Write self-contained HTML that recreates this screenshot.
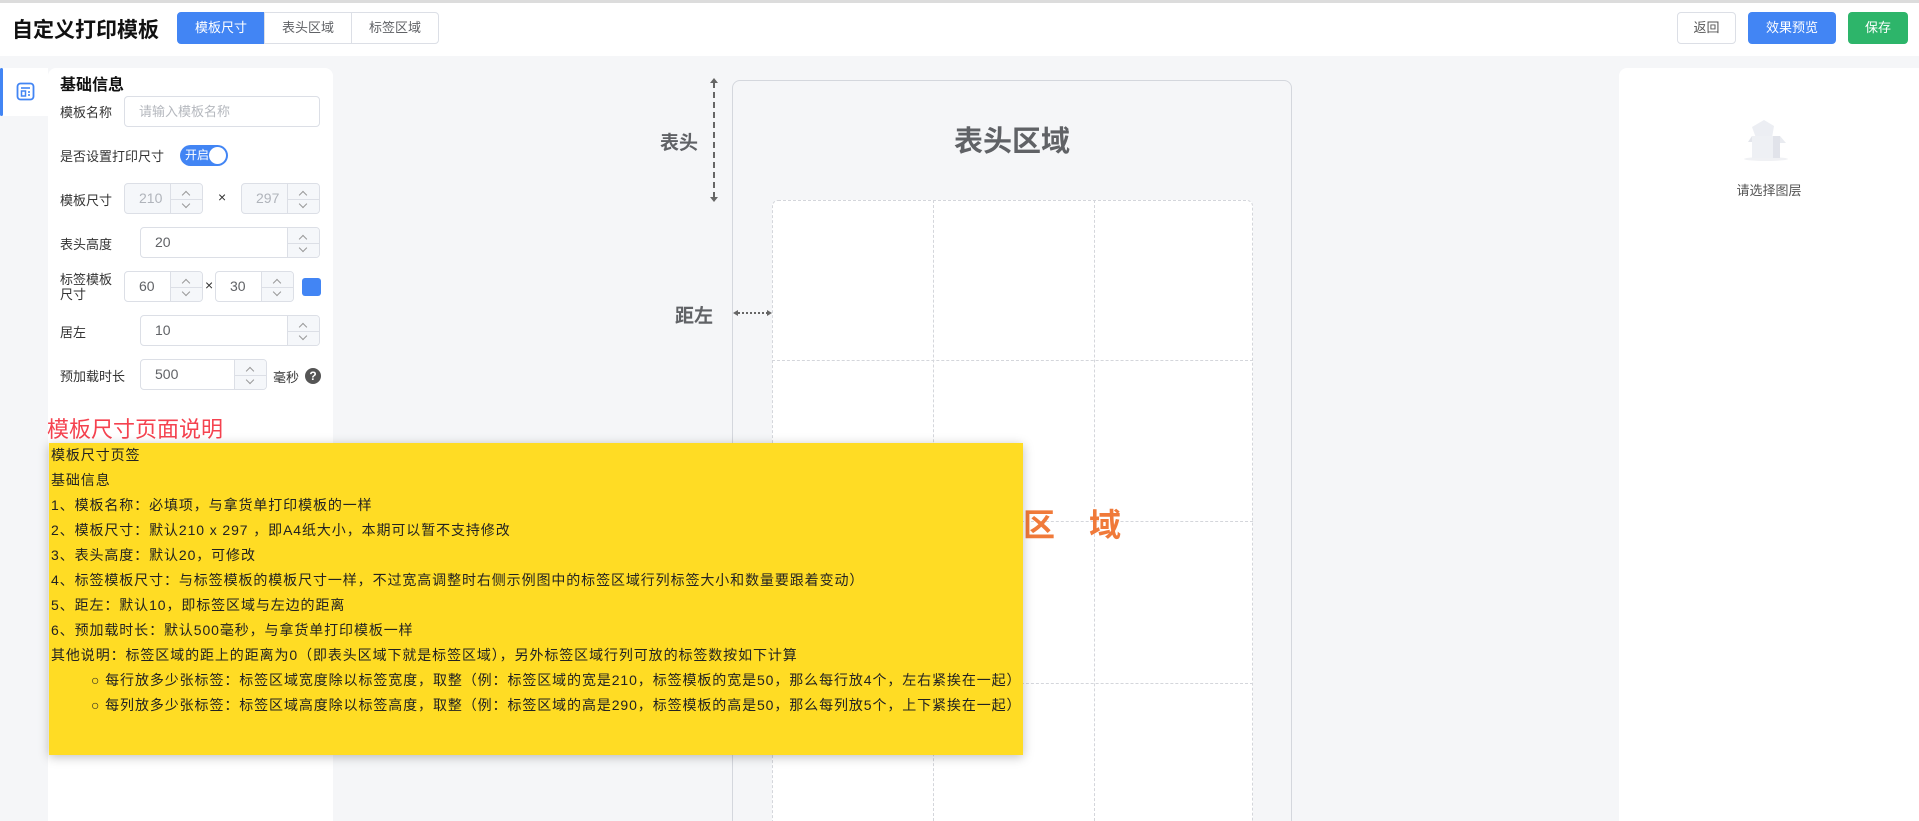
<!DOCTYPE html>
<html><head><meta charset="utf-8"><style>
*{box-sizing:border-box;margin:0;padding:0}
html{width:1919px;height:821px;overflow:hidden}
body{width:1919px;height:821px;overflow:hidden;background:#f5f6f8;font-family:"Liberation Sans","Noto Sans CJK SC",sans-serif;color:#333;position:relative}
.a{position:absolute}
.hdr{left:0;top:0;width:1919px;height:56px;background:#fff;border-top:3px solid #dcdcdc}
.tab{top:12px;height:32px;border:1px solid #dcdfe6;font-size:13px;line-height:30px;text-align:center;color:#606266;background:#fff}
.btn{top:12px;height:32px;border-radius:4px;font-size:13px;line-height:32px;text-align:center;color:#fff}
.lbl{font-size:13px;color:#333;white-space:nowrap}
.inp{border:1px solid #dcdfe6;border-radius:4px;background:#fff;height:31px;font-size:14px;color:#606266;line-height:29px;padding-left:14px;overflow:hidden}
.inp.dis{background:#f5f7fa;color:#b0b4bb}
.sp{position:absolute;right:0;top:0;width:32px;height:100%;border-left:1px solid #dcdfe6;background:#f5f7fa}
.sp:after{content:"";position:absolute;left:0;right:0;top:50%;border-top:1px solid #dcdfe6}
.sp i{position:absolute;left:12px;width:6px;height:6px;border-left:1px solid #999;border-top:1px solid #999}
.sp i.u{top:8px;transform:rotate(45deg)}
.sp i.d{top:17px;transform:rotate(225deg)}
.y p{font-size:14px;letter-spacing:0.9px;line-height:25px;height:25px;white-space:nowrap;color:#222}
</style></head><body>
<div class="a hdr"></div>
<div class="a" style="left:12px;top:14px;font-size:21px;font-weight:bold;color:#111">自定义打印模板</div>
<div class="a tab" style="left:177px;width:88px;background:#4285f4;color:#fff;border-color:#4285f4;border-radius:4px 0 0 4px">模板尺寸</div>
<div class="a tab" style="left:264px;width:88px">表头区域</div>
<div class="a tab" style="left:351px;width:88px;border-radius:0 4px 4px 0">标签区域</div>
<div class="a btn" style="left:1677px;width:59px;border:1px solid #dcdfe6;color:#555;line-height:30px;background:#fff">返回</div>
<div class="a btn" style="left:1748px;width:88px;background:#4285f4">效果预览</div>
<div class="a btn" style="left:1848px;width:60px;background:#2db56a">保存</div>

<div class="a" style="left:0;top:68px;width:48px;height:48px;background:#fff"></div>
<div class="a" style="left:0;top:68px;width:3px;height:48px;background:#4285f4;border-radius:2px"></div>
<svg class="a" style="left:16px;top:82px" width="19" height="19" viewBox="0 0 19 19"><rect x="1.5" y="1.5" width="16" height="16" rx="3" fill="none" stroke="#4285f4" stroke-width="1.8"/><line x1="5" y1="6" x2="14" y2="6" stroke="#4285f4" stroke-width="1.6"/><rect x="5.5" y="9" width="4" height="5" fill="none" stroke="#4285f4" stroke-width="1.5"/><line x1="12" y1="10" x2="14" y2="10" stroke="#4285f4" stroke-width="1.6"/><line x1="12" y1="13" x2="14" y2="13" stroke="#4285f4" stroke-width="1.6"/></svg>

<div class="a" style="left:48px;top:68px;width:285px;height:753px;background:#fff;border-radius:8px 8px 0 0"></div>
<div class="a" style="left:60px;top:71px;font-size:16px;font-weight:bold;color:#111">基础信息</div>
<div class="a lbl" style="left:60px;top:102px">模板名称</div>
<div class="a inp" style="left:124px;top:96px;width:196px;color:#b5b8be;font-size:13px">请输入模板名称</div>
<div class="a lbl" style="left:60px;top:146px">是否设置打印尺寸</div>
<div class="a" style="left:180px;top:145px;width:48px;height:21px;border-radius:11px;background:#4285f4;color:#fff;font-size:12px;line-height:21px;padding-left:5px">开启<span style="position:absolute;right:2px;top:2px;width:17px;height:17px;border-radius:50%;background:#fff"></span></div>
<div class="a lbl" style="left:60px;top:190px">模板尺寸</div>
<div class="a inp dis" style="left:124px;top:183px;width:79px">210<div class="sp"><i class="u"></i><i class="d"></i></div></div>
<div class="a" style="left:218px;top:189px;font-size:14px">×</div>
<div class="a inp dis" style="left:241px;top:183px;width:79px">297<div class="sp"><i class="u"></i><i class="d"></i></div></div>
<div class="a lbl" style="left:60px;top:234px">表头高度</div>
<div class="a inp" style="left:140px;top:227px;width:180px">20<div class="sp"><i class="u"></i><i class="d"></i></div></div>
<div class="a lbl" style="left:60px;top:272px;line-height:15px">标签模板<br>尺寸</div>
<div class="a inp" style="left:124px;top:271px;width:79px">60<div class="sp"><i class="u"></i><i class="d"></i></div></div>
<div class="a" style="left:205px;top:277px;font-size:14px">×</div>
<div class="a inp" style="left:215px;top:271px;width:79px">30<div class="sp"><i class="u"></i><i class="d"></i></div></div>
<div class="a" style="left:302px;top:278px;width:19px;height:18px;border-radius:3px;background:#4285f4"></div>
<div class="a lbl" style="left:60px;top:322px">居左</div>
<div class="a inp" style="left:140px;top:315px;width:180px">10<div class="sp"><i class="u"></i><i class="d"></i></div></div>
<div class="a lbl" style="left:60px;top:366px">预加载时长</div>
<div class="a inp" style="left:140px;top:359px;width:127px">500<div class="sp"><i class="u"></i><i class="d"></i></div></div>
<div class="a lbl" style="left:273px;top:367px">毫秒</div>
<div class="a" style="left:305px;top:368px;width:16px;height:16px;border-radius:50%;background:#555;color:#fff;font-size:12px;font-weight:bold;line-height:16px;text-align:center">?</div>
<div class="a" style="left:47px;top:412px;font-size:22px;color:#f5424f">模板尺寸页面说明</div>

<div class="a" style="left:732px;top:80px;width:560px;height:760px;border:1px solid #d4d7dd;border-radius:8px;background:#f5f6f8"></div>
<div class="a" style="left:732px;top:118px;width:560px;text-align:center;font-size:29px;font-weight:bold;color:#606266">表头区域</div>
<div class="a" style="left:772px;top:200px;width:481px;height:640px;background:#fff;border:1px dashed #d4d6db;border-radius:6px"></div>
<div class="a" style="left:933px;top:200px;height:621px;border-left:1px dashed #d4d6db"></div>
<div class="a" style="left:1094px;top:200px;height:621px;border-left:1px dashed #d4d6db"></div>
<div class="a" style="left:772px;top:360px;width:481px;border-top:1px dashed #d4d6db"></div>
<div class="a" style="left:772px;top:521px;width:481px;border-top:1px dashed #d4d6db"></div>
<div class="a" style="left:772px;top:683px;width:481px;border-top:1px dashed #d4d6db"></div>
<div class="a" style="left:891px;top:500px;font-size:32px;font-weight:bold;color:#f07a3a;letter-spacing:34px;white-space:nowrap">标签区域</div>
<div class="a" style="left:660px;top:128px;font-size:19px;font-weight:bold;color:#606266">表头</div>
<div class="a" style="left:713px;top:82px;height:116px;border-left:2px dashed #666"></div>
<div class="a" style="left:710px;top:78px;border:4px solid transparent;border-bottom:5px solid #666;border-top:0"></div>
<div class="a" style="left:710px;top:197px;border:4px solid transparent;border-top:5px solid #666;border-bottom:0"></div>
<div class="a" style="left:675px;top:301px;font-size:19px;font-weight:bold;color:#606266">距左</div>
<div class="a" style="left:738px;top:312px;width:30px;border-top:2px dotted #666"></div>
<div class="a" style="left:733px;top:310px;border:3px solid transparent;border-right:5px solid #666;border-left:0"></div>
<div class="a" style="left:767px;top:310px;border:3px solid transparent;border-left:5px solid #666;border-right:0"></div>

<div class="a" style="left:1619px;top:68px;width:300px;height:753px;background:#fff;border-radius:8px 0 0 0"></div>
<svg class="a" style="left:1744px;top:112px" width="44" height="50" viewBox="0 0 44 50"><ellipse cx="22" cy="47" rx="22" ry="2" fill="#f0f1f4"/><polygon points="8,15 20,8 30,14 28,26 12,26" fill="#eceef3"/><rect x="8" y="24" width="28" height="22" fill="#eef0f4"/><rect x="29" y="24" width="7" height="22" fill="#e1e3ea"/><polygon points="4,30 8,24 8,30" fill="#e3e5eb"/><polygon points="36,24 42,31 36,31" fill="#e9ebf0"/></svg>
<div class="a" style="left:1619px;top:180px;width:300px;text-align:center;font-size:13px;color:#555">请选择图层</div>

<div class="a y" style="left:49px;top:443px;width:974px;height:312px;background:#ffdc24;box-shadow:0 2px 10px rgba(0,0,0,.25);padding:0 2px;overflow:hidden">
<p>模板尺寸页签</p>
<p>基础信息</p>
<p>1、模板名称：必填项，与拿货单打印模板的一样</p>
<p>2、模板尺寸：默认210 x 297 ，即A4纸大小，本期可以暂不支持修改</p>
<p>3、表头高度：默认20，可修改</p>
<p>4、标签模板尺寸：与标签模板的模板尺寸一样，不过宽高调整时右侧示例图中的标签区域行列标签大小和数量要跟着变动）</p>
<p>5、距左：默认10，即标签区域与左边的距离</p>
<p>6、预加载时长：默认500毫秒，与拿货单打印模板一样</p>
<p>其他说明：标签区域的距上的距离为0（即表头区域下就是标签区域），另外标签区域行列可放的标签数按如下计算</p>
<p style="padding-left:40px">○ 每行放多少张标签：标签区域宽度除以标签宽度，取整（例：标签区域的宽是210，标签模板的宽是50，那么每行放4个，左右紧挨在一起）</p>
<p style="padding-left:40px">○ 每列放多少张标签：标签区域高度除以标签高度，取整（例：标签区域的高是290，标签模板的高是50，那么每列放5个，上下紧挨在一起）</p>
</div>
</body></html>
